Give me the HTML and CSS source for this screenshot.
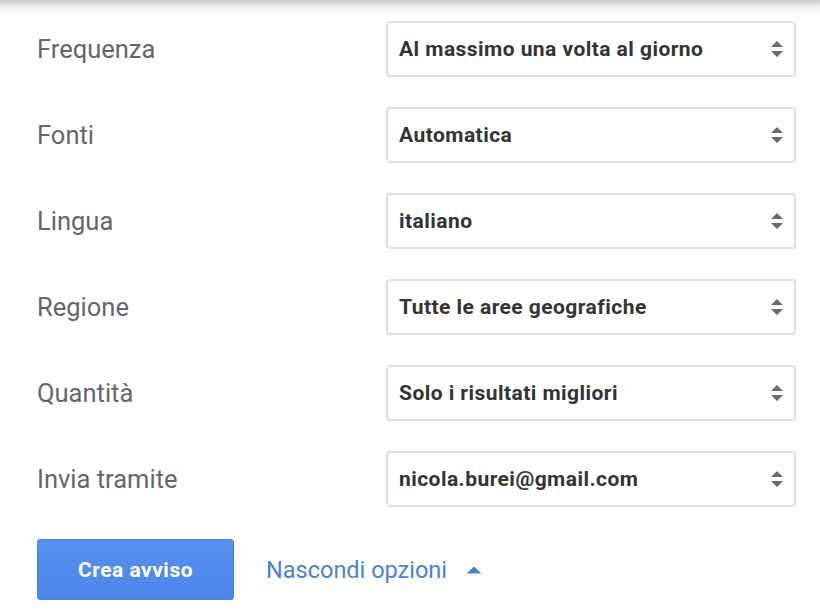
FILE: index.html
```html
<!DOCTYPE html>
<html lang="it">
<head>
    <meta charset="UTF-8">
    <meta name="viewport" content="width=device-width, initial-scale=1.0">
    <title>Opzioni avviso</title>
    <link rel="stylesheet" href="styles.css">
</head>
<body>
    <!-- Ombra in alto -->
    <div class="top-shade"></div>

    <div class="options">
        <div class="option-row">
            <span class="option-label">Frequenza</span>
            <div class="option-select">
                <span>Al massimo una volta al giorno</span>
                <svg class="arrows" width="14" height="20" viewBox="0 0 14 20"><path d="M7 2 L13 8 H1 Z M1 12 H13 L7 18 Z" fill="#6a6a6a"/></svg>
            </div>
        </div>
        <div class="option-row">
            <span class="option-label">Fonti</span>
            <div class="option-select">
                <span>Automatica</span>
                <svg class="arrows" width="14" height="20" viewBox="0 0 14 20"><path d="M7 2 L13 8 H1 Z M1 12 H13 L7 18 Z" fill="#6a6a6a"/></svg>
            </div>
        </div>
        <div class="option-row">
            <span class="option-label">Lingua</span>
            <div class="option-select">
                <span>italiano</span>
                <svg class="arrows" width="14" height="20" viewBox="0 0 14 20"><path d="M7 2 L13 8 H1 Z M1 12 H13 L7 18 Z" fill="#6a6a6a"/></svg>
            </div>
        </div>
        <div class="option-row">
            <span class="option-label">Regione</span>
            <div class="option-select">
                <span>Tutte le aree geografiche</span>
                <svg class="arrows" width="14" height="20" viewBox="0 0 14 20"><path d="M7 2 L13 8 H1 Z M1 12 H13 L7 18 Z" fill="#6a6a6a"/></svg>
            </div>
        </div>
        <div class="option-row">
            <span class="option-label">Quantità</span>
            <div class="option-select">
                <span>Solo i risultati migliori</span>
                <svg class="arrows" width="14" height="20" viewBox="0 0 14 20"><path d="M7 2 L13 8 H1 Z M1 12 H13 L7 18 Z" fill="#6a6a6a"/></svg>
            </div>
        </div>
        <div class="option-row">
            <span class="option-label">Invia tramite</span>
            <div class="option-select">
                <span>nicola.burei@gmail.com</span>
                <svg class="arrows" width="14" height="20" viewBox="0 0 14 20"><path d="M7 2 L13 8 H1 Z M1 12 H13 L7 18 Z" fill="#6a6a6a"/></svg>
            </div>
        </div>
    </div>

    <div class="actions">
        <button class="create-btn">Crea avviso</button>
        <a class="toggle-link" href="#">Nascondi opzioni
            <svg width="16" height="8" viewBox="0 0 16 8"><path d="M8 0.5 L15.5 7.5 H0.5 Z" fill="#4a7fdc"/></svg>
        </a>
    </div>
</body>
</html>
```

FILE: styles.css
```css
* {
    margin: 0;
    padding: 0;
    box-sizing: border-box;
    font-family: Roboto, 'Liberation Sans', sans-serif;
}

body {
    background: #fff;
    width: 820px;
    height: 616px;
    overflow: hidden;
}

/* Ombra in alto */
.top-shade {
    height: 21px;
    background: linear-gradient(#cbcbcb 0px, #ececec 6px, #fbfbfb 13px, #fff 18px);
}

/* Righe delle opzioni */
.options {
    display: flex;
    flex-direction: column;
    gap: 30px;
    padding-left: 37px;
}

.option-row {
    display: grid;
    grid-template-columns: 349px 410px;
    align-items: center;
    height: 56px;
}

.option-label {
    font-size: 25.5px;
    color: #666;
}

.option-select {
    height: 56px;
    border: 2px solid #e0e0e0;
    border-radius: 4px;
    display: flex;
    align-items: center;
    justify-content: space-between;
    padding: 0 10px 0 11px;
    font-size: 21px;
    letter-spacing: 0.45px;
    font-weight: bold;
    color: #333;
}

/* Pulsanti */
.actions {
    display: flex;
    align-items: center;
    gap: 32px;
    padding: 32px 0 0 37px;
}

.create-btn {
    width: 197px;
    height: 61px;
    border: 1px solid #4a80e0;
    border-radius: 3px;
    background: linear-gradient(#5690f0, #4d86ea);
    color: #fff;
    font-size: 21px;
    letter-spacing: 0.5px;
    font-weight: bold;
    cursor: pointer;
}

.toggle-link {
    display: flex;
    align-items: center;
    gap: 19px;
    font-size: 23.5px;
    color: #4a7fdc;
    text-decoration: none;
}
```
